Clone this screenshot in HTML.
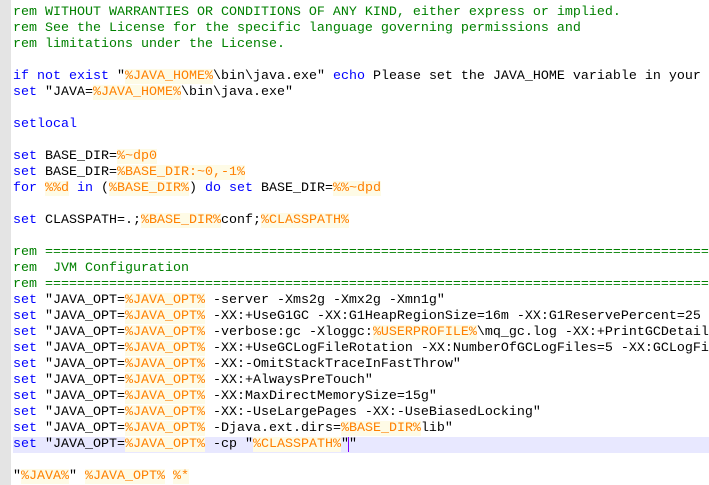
<!DOCTYPE html><html><head><style>
body{margin:0;width:709px;height:485px;overflow:hidden;background:#fff;font-family:"Courier New","Liberation Mono",monospace;font-size:13.33px}
.g{position:absolute;left:0;top:0;width:11px;height:485px;background:#e4e4e4}
.c{position:absolute;left:13px;top:5px;width:696px;overflow:hidden}
.l{height:16px;line-height:16px;white-space:pre;color:#000;overflow:hidden}
.cur{background:#e8e8ff;margin-left:-2px;padding-left:2px}
.r{color:#008000}.k{color:#0000ff}.v{color:#ff8000;background:#fefbe6}
.caret{border-left:1px solid #8000ff;margin-left:-1px}
</style></head><body><div class="g"></div><div class="c">
<div class="l r">rem WITHOUT WARRANTIES OR CONDITIONS OF ANY KIND, either express or implied.</div>
<div class="l r">rem See the License for the specific language governing permissions and</div>
<div class="l r">rem limitations under the License.</div>
<div class="l"> </div>
<div class="l"><span class="k">if not exist</span> "<span class="v">%JAVA_HOME%</span>\bin\java.exe" <span class="k">echo</span> Please set the JAVA_HOME variable in your</div>
<div class="l"><span class="k">set</span> "JAVA=<span class="v">%JAVA_HOME%</span>\bin\java.exe"</div>
<div class="l"> </div>
<div class="l k">setlocal</div>
<div class="l"> </div>
<div class="l"><span class="k">set</span> BASE_DIR=<span class="v">%~dp0</span></div>
<div class="l"><span class="k">set</span> BASE_DIR=<span class="v">%BASE_DIR:~0,-1%</span></div>
<div class="l"><span class="k">for</span> <span class="v">%%d</span> <span class="k">in</span> (<span class="v">%BASE_DIR%</span>) <span class="k">do set</span> BASE_DIR=<span class="v">%%~dpd</span></div>
<div class="l"> </div>
<div class="l"><span class="k">set</span> CLASSPATH=.;<span class="v">%BASE_DIR%</span>conf;<span class="v">%CLASSPATH%</span></div>
<div class="l"> </div>
<div class="l r">rem ===========================================================================================</div>
<div class="l r">rem  JVM Configuration</div>
<div class="l r">rem ===========================================================================================</div>
<div class="l"><span class="k">set</span> "JAVA_OPT=<span class="v">%JAVA_OPT%</span> -server -Xms2g -Xmx2g -Xmn1g"</div>
<div class="l"><span class="k">set</span> "JAVA_OPT=<span class="v">%JAVA_OPT%</span> -XX:+UseG1GC -XX:G1HeapRegionSize=16m -XX:G1ReservePercent=25</div>
<div class="l"><span class="k">set</span> "JAVA_OPT=<span class="v">%JAVA_OPT%</span> -verbose:gc -Xloggc:<span class="v">%USERPROFILE%</span>\mq_gc.log -XX:+PrintGCDetail</div>
<div class="l"><span class="k">set</span> "JAVA_OPT=<span class="v">%JAVA_OPT%</span> -XX:+UseGCLogFileRotation -XX:NumberOfGCLogFiles=5 -XX:GCLogFi</div>
<div class="l"><span class="k">set</span> "JAVA_OPT=<span class="v">%JAVA_OPT%</span> -XX:-OmitStackTraceInFastThrow"</div>
<div class="l"><span class="k">set</span> "JAVA_OPT=<span class="v">%JAVA_OPT%</span> -XX:+AlwaysPreTouch"</div>
<div class="l"><span class="k">set</span> "JAVA_OPT=<span class="v">%JAVA_OPT%</span> -XX:MaxDirectMemorySize=15g"</div>
<div class="l"><span class="k">set</span> "JAVA_OPT=<span class="v">%JAVA_OPT%</span> -XX:-UseLargePages -XX:-UseBiasedLocking"</div>
<div class="l"><span class="k">set</span> "JAVA_OPT=<span class="v">%JAVA_OPT%</span> -Djava.ext.dirs=<span class="v">%BASE_DIR%</span>lib"</div>
<div class="l cur"><span class="k">set</span> "JAVA_OPT=<span class="v">%JAVA_OPT%</span> -cp "<span class="v">%CLASSPATH%</span>"<span class="caret"></span>"</div>
<div class="l"> </div>
<div class="l">"<span class="v">%JAVA%</span>" <span class="v">%JAVA_OPT%</span> <span class="v">%*</span></div>
</div></body></html>
